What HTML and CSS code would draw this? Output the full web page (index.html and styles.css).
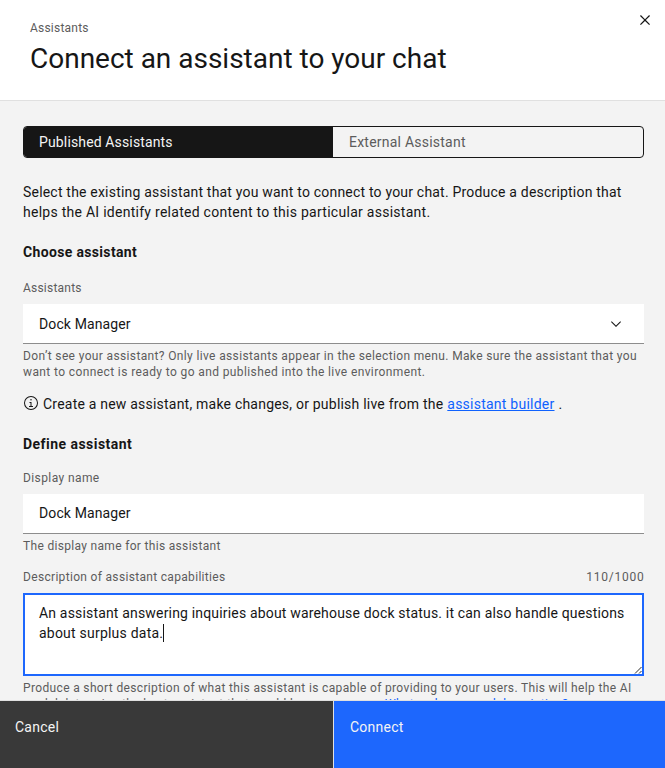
FILE: index.html
```
<!DOCTYPE html>
<html lang="en">
<head>
<meta charset="utf-8">
<title>Connect an assistant to your chat</title>
<link rel="stylesheet" href="styles.css">
</head>
<body>
<div class="modal">
  <header class="header">
    <div>
      <p class="eyebrow">Assistants</p>
      <h1 class="title">Connect an assistant to your chat</h1>
    </div>
    <button class="close" aria-label="Close">
      <svg width="20" height="20" viewBox="0 0 32 32"><path d="M24 9.4 22.6 8 16 14.6 9.4 8 8 9.4 14.6 16 8 22.6 9.4 24 16 17.4 22.6 24 24 22.6 17.4 16 24 9.4z"/></svg>
    </button>
  </header>

  <main class="content">
    <div class="switcher">
      <button class="tab tab-selected">Published Assistants</button>
      <button class="tab">External Assistant</button>
    </div>

    <p class="intro">
      <span class="line ls-20">Select the existing assistant that you want to connect to your chat. Produce a description that</span>
      <span class="line ls-27">helps the AI identify related content to this particular assistant.</span>
    </p>

    <h2 class="section section-choose">Choose assistant</h2>
    <p class="label label-select">Assistants</p>
    <div class="field">
      <span>Dock Manager</span>
      <svg class="chevron" width="16" height="16" viewBox="0 0 16 16"><path d="M8 11 3 6l.7-.7L8 9.6l4.3-4.3.7.7z"/></svg>
    </div>
    <p class="helper">
      <span class="line ls-37">Don’t see your assistant? Only live assistants appear in the selection menu. Make sure the assistant that you</span>
      <span class="line ls-40">want to connect is ready to go and published into the live environment.</span>
    </p>

    <p class="note">
      <svg class="info" width="16" height="16" viewBox="0 0 32 32"><path d="M17 22v-8h-4v2h2v6h-3v2h8v-2zM16 8a1.5 1.5 0 1 0 1.5 1.5A1.5 1.5 0 0 0 16 8z"/><path d="M16 30a14 14 0 1 1 14-14 14 14 0 0 1-14 14zm0-26a12 12 0 1 0 12 12A12 12 0 0 0 16 4z"/></svg>
      <span class="note-text">Create a new assistant, make changes, or publish live from the</span>
      <a class="link note-link">assistant builder</a>
      <span>.</span>
    </p>

    <h2 class="section section-define">Define assistant</h2>
    <p class="label label-name">Display name</p>
    <div class="field field-name">Dock Manager</div>
    <p class="helper">The display name for this assistant</p>

    <div class="label label-row">
      <span>Description of assistant capabilities</span>
      <span class="counter">110/1000</span>
    </div>
    <div class="textarea">
      <span class="line ls-18">An assistant answering inquiries about warehouse dock status. it can also handle questions</span>
      <span class="line ls-24">about surplus data.<i class="caret"></i></span>
      <svg class="grip" width="8" height="8" viewBox="0 0 8 8"><path d="M1 7.5 7.5 1M5 7.5 7.5 5"/></svg>
    </div>
    <div class="helper">
      <span class="line ls-36">Produce a short description of what this assistant is capable of providing to your users. This will help the AI</span>
      <span class="line last-line"><span class="last-text">model determine the best assistant that would be necessary.</span><a class="link last-link">What makes a good description?</a></span>
    </div>
  </main>

  <footer class="footer">
    <button class="action cancel">Cancel</button>
    <button class="action connect">Connect</button>
  </footer>
</div>
</body>
</html>
```
FILE: styles.css
```
* { box-sizing: border-box; margin: 0; padding: 0; }
body {
  font: 14px/20px Roboto, "Liberation Sans", sans-serif;
  letter-spacing: .12px;
  color: #161616;
  background: #f3f3f3;
}
button { font: inherit; letter-spacing: inherit; border: 0; text-align: left; }
svg { display: block; fill: currentColor; flex: none; }

.modal { display: flex; flex-direction: column; height: 768px; overflow: hidden; }

.header {
  display: flex;
  justify-content: space-between;
  flex: none;
  height: 101px;
  padding: 20px 10px 0 30px;
  background: #fff;
  border-bottom: 1px solid #e0e0e0;
}
.eyebrow { font-size: 12px; line-height: 16px; letter-spacing: .22px; color: #5c5c5c; }
.title { margin-top: 5px; font-size: 28px; line-height: 36px; font-weight: 400; letter-spacing: -.01px; }
.close { width: 20px; height: 20px; margin-top: -10px; background: none; color: #161616; }

.content { flex: 1; min-height: 0; overflow: hidden; padding: 25px 21px 0 23px; }
.switcher {
  display: grid;
  grid-template-columns: 309px 1fr;
  height: 32px;
  border: 1px solid #161616;
  border-radius: 4px;
  overflow: hidden;
}
.tab { padding: 0 16px; background: transparent; color: #5c5c5c; letter-spacing: .23px; }
.tab-selected { padding-left: 15px; background: #161616; color: #f4f4f4; letter-spacing: .14px; }

.line { display: block; white-space: nowrap; }
.ls-18 { letter-spacing: .174px; }
.ls-20 { letter-spacing: .2px; }
.ls-24 { letter-spacing: .22px; }
.ls-27 { letter-spacing: .268px; }
.ls-36 { letter-spacing: .35px; }
.ls-37 { letter-spacing: .36px; }
.ls-40 { letter-spacing: .39px; }

.intro { margin-top: 24px; }
.section { font-size: 14px; line-height: 20px; font-weight: 700; }
.section-choose { margin-top: 20px; letter-spacing: .34px; }
.section-define { margin-top: 20px; letter-spacing: .46px; }

.label, .helper { font-size: 12px; line-height: 16px; color: #5c5c5c; }
.label { letter-spacing: .32px; }
.label-select { margin-top: 18px; letter-spacing: .22px; }
.label-name { margin-top: 16px; letter-spacing: .4px; }
.label-row { display: flex; justify-content: space-between; margin-top: 15px; }
.counter { letter-spacing: .75px; margin-right: -.5px; }
.helper { margin-top: 4px; letter-spacing: .32px; }

.field {
  display: flex;
  align-items: center;
  justify-content: space-between;
  height: 40px;
  margin-top: 8px;
  padding: 1px 20px 0 16px;
  background: #fff;
  border-bottom: 1px solid #8d8d8d;
}
.field-name { padding: 0 20px 1px 16px; }

.note { display: flex; margin-top: 14px; }
.info { margin-top: 1px; }
.note-text { margin-left: 4px; letter-spacing: .215px; white-space: nowrap; }
.link { color: #0f62fe; text-decoration: underline; white-space: nowrap; }
.note-link { margin: 0 4px; letter-spacing: .24px; }

.textarea {
  position: relative;
  height: 83px;
  margin-top: 8px;
  padding: 8px 14px;
  background: #fff;
  border: 2px solid #1d67fd;
}
.caret {
  display: inline-block;
  width: 1px;
  height: 18px;
  margin: -2px 0 -4px;
  vertical-align: 0;
  background: #161616;
}
.grip { position: absolute; right: 0; bottom: 0; fill: none; stroke: #161616; stroke-width: .9; }
.last-line { display: flex; }
.last-text { width: 362px; letter-spacing: .36px; }
.last-link { letter-spacing: .3px; text-decoration: none; }

.footer {
  display: grid;
  grid-template-columns: 333px 1fr;
  gap: 1px;
  flex: none;
  height: 68px;
  border-top: 1px solid #e0e0e0;
  background: #e0e0e0;
}
.action { display: flex; padding: 16px; color: #f4f4f4; letter-spacing: .25px; }
.cancel { padding-left: 15px; background: #393939; }
.connect { background: #1d67fd; }
```
